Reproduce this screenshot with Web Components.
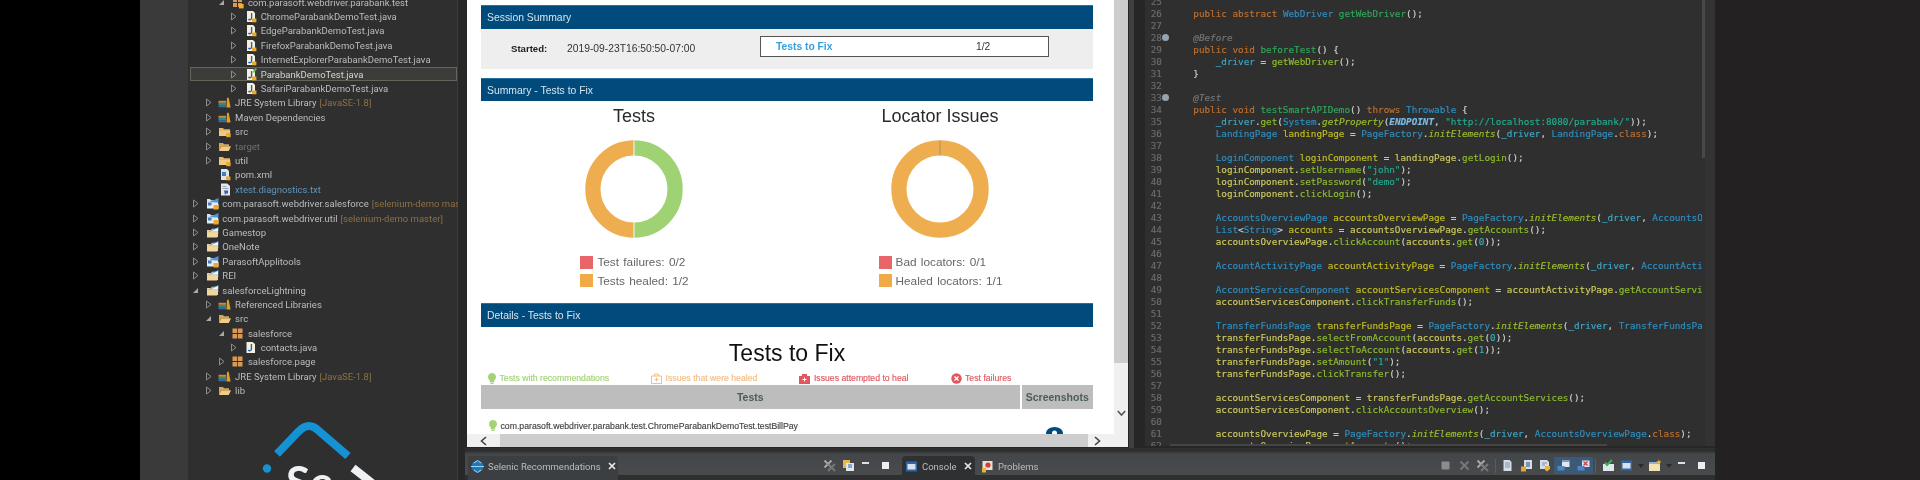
<!DOCTYPE html>
<html>
<head>
<meta charset="utf-8">
<title>Selenic</title>
<style>
html, body { margin: 0; height: 480px; overflow: hidden; background: #000; }
</style>
</head>
<body>
<ide-shot>
    <project-tree slot="tree">
        <tree-row level="2" arrow="open" icon="pkg">com.parasoft.webdriver.parabank.test</tree-row>
        <tree-row level="3" arrow="closed" icon="java">ChromeParabankDemoTest.java</tree-row>
        <tree-row level="3" arrow="closed" icon="java">EdgeParabankDemoTest.java</tree-row>
        <tree-row level="3" arrow="closed" icon="java">FirefoxParabankDemoTest.java</tree-row>
        <tree-row level="3" arrow="closed" icon="java">InternetExplorerParabankDemoTest.java</tree-row>
        <tree-row level="3" arrow="closed" icon="javatest" selected>ParabankDemoTest.java</tree-row>
        <tree-row level="3" arrow="closed" icon="java">SafariParabankDemoTest.java</tree-row>
        <tree-row level="1" arrow="closed" icon="lib" deco="[JavaSE-1.8]">JRE System Library</tree-row>
        <tree-row level="1" arrow="closed" icon="lib">Maven Dependencies</tree-row>
        <tree-row level="1" arrow="closed" icon="srcfolder">src</tree-row>
        <tree-row level="1" arrow="closed" icon="folder" tone="muted">target</tree-row>
        <tree-row level="1" arrow="closed" icon="srcfolder">util</tree-row>
        <tree-row level="1" icon="xml">pom.xml</tree-row>
        <tree-row level="1" icon="txt" tone="link">xtest.diagnostics.txt</tree-row>
        <tree-row level="0" arrow="closed" icon="gitproject" deco="[selenium-demo master]">com.parasoft.webdriver.salesforce</tree-row>
        <tree-row level="0" arrow="closed" icon="gitproject" deco="[selenium-demo master]">com.parasoft.webdriver.util</tree-row>
        <tree-row level="0" arrow="closed" icon="project">Gamestop</tree-row>
        <tree-row level="0" arrow="closed" icon="project">OneNote</tree-row>
        <tree-row level="0" arrow="closed" icon="gitproject">ParasoftApplitools</tree-row>
        <tree-row level="0" arrow="closed" icon="project">REI</tree-row>
        <tree-row level="0" arrow="open" icon="project">salesforceLightning</tree-row>
        <tree-row level="1" arrow="closed" icon="lib">Referenced Libraries</tree-row>
        <tree-row level="1" arrow="open" icon="folder">src</tree-row>
        <tree-row level="2" arrow="open" icon="pkgplain">salesforce</tree-row>
        <tree-row level="3" arrow="closed" icon="javaplain">contacts.java</tree-row>
        <tree-row level="2" arrow="closed" icon="pkgplain">salesforce.page</tree-row>
        <tree-row level="1" arrow="closed" icon="lib" deco="[JavaSE-1.8]">JRE System Library</tree-row>
        <tree-row level="1" arrow="closed" icon="folder">lib</tree-row>
    </project-tree>
    <report-view slot="report"></report-view>
    <code-editor slot="editor"></code-editor>
    <tab-strip slot="tabs-left" kind="left"></tab-strip>
    <tab-strip slot="tabs-right" kind="right"></tab-strip>
</ide-shot>

<script>
const TREE_ICONS = {
    java: '<path d="M3 1h6l2 2v9H3z" fill="#f6f1de"/><path d="M7.600 3v5.200a1.700 1.700 0 0 1-3.100.8" stroke="#2c62b4" stroke-width="1.400" fill="none"/><rect x="8" y="8.500" width="4.400" height="3.800" fill="#eeaa2c"/>',
    javatest: '<path d="M3 1h6l2 2v9H3z" fill="#f6f1de"/><path d="M7.600 3v5.200a1.700 1.700 0 0 1-3.100.8" stroke="#2c62b4" stroke-width="1.400" fill="none"/><path d="M9 4l2-4 2 1-3 4z" fill="#5cb85c"/><rect x="8" y="8.500" width="4.400" height="3.800" fill="#eeaa2c"/>',
    javaplain: '<path d="M2.500 1h6l2.500 2v9H2.500z" fill="#f6f1de"/><path d="M7.400 3v5.200a1.700 1.700 0 0 1-3.100.8" stroke="#2c62b4" stroke-width="1.400" fill="none"/>',
    pkg: '<path d="M2 2h4v4H2zM7 2h4v4H7zM2 7h4v4H2zM7 7h4v4H7z" fill="#d99a58"/><rect x="8" y="8" width="4.600" height="4.400" fill="#f0b030"/>',
    pkgplain: '<path d="M1.500 1.500h4.600v4.600H1.500zM6.900 1.500h4.600v4.600H6.900zM1.500 6.900h4.600v4.600H1.500zM6.900 6.900h4.600v4.600H6.900z" fill="#d99a58"/>',
    lib: '<rect x="0.500" y="7" width="7.500" height="2" fill="#2f8d80"/><rect x="0.500" y="9.200" width="7.500" height="2" fill="#3b6fa8"/><rect x="0.500" y="4.800" width="7.500" height="2" fill="#c98f3a"/><path d="M8.500 11.500L9 2l1.600-.4 2 9.900z" fill="#e0a02c"/>',
    srcfolder: '<path d="M1 3h4l1 1.300h6V11H1z" fill="#e5b768"/><path d="M1 6h11.500L11 11H1z" fill="#f0ca80"/><rect x="8.200" y="8" width="4.400" height="4.200" fill="#eeaa2c"/>',
    folder: '<path d="M1 3h4l1 1.300h5V6H3.400L1 11z" fill="#d9a552"/><path d="M3.400 6.200H13L10.800 11H1z" fill="#f2cc85"/>',
    xml: '<path d="M3 1h6l2 2v9H3z" fill="#dfe4ea"/><rect x="4" y="4" width="4" height="4" fill="#3f7fc0"/><rect x="8" y="8.500" width="4.400" height="3.800" fill="#eeaa2c"/>',
    txt: '<path d="M3 .5h6.200L12 3v9.500H3z" fill="#e3e7ee"/><path d="M4.500 3.500h4M4.500 5.500h6" stroke="#9aa8bc"/><path d="M6 7.500h4v3H8l-1 1.500z" fill="#3360a8"/>',
    project: '<path d="M1 4h4l1-1.300h6V11H1z" fill="#e8d098"/><path d="M2.500 5.500L12.500 1v4.500z" fill="#5a9ad6"/><path d="M4 5.500l8-3.400v3.400z" fill="#f4f6fa"/><path d="M1 6.500h11.500L11 11.500H1z" fill="#f1d79c"/>',
    gitproject: '<path d="M1 2h3l1 1.300h7V11H1z" fill="#d7e2ee"/><path d="M3.500 5L12.500 1v4.500z" fill="#4f94d4"/><path d="M1 6.500h11.500V11.500H1z" fill="#e9edf2"/><path d="M2 5.500h3.500v3H2z" fill="#3f7fc0"/><rect x="7.500" y="8" width="5" height="4.500" fill="#eeaa2c"/>'
};

const treeRowTemplate = document.createElement('template');
treeRowTemplate.innerHTML = `
<style>
    :host {
        display: flex;
        align-items: center;
        height: 14.4px;
        box-sizing: border-box;
        padding-left: calc(4px + var(--level) * 12.8px);
        overflow: hidden;
        white-space: nowrap;
        color: #bcbcbc;
    }
    :host([selected]) {
        margin: 0 1px 0 2px;
        padding-left: calc(2px + var(--level) * 12.8px);
        background: #3c3d38;
        box-shadow: inset 0 0 0 1px #63645a;
        color: #d4d4d4;
    }
    :host([tone="muted"]) .label { color: #6f6f6f; }
    :host([tone="link"]) .label { color: #5f93b8; }
    .arrow { flex: none; width: 7px; height: 9px; margin-right: 6.5px; }
    svg.icon { flex: none; width: 13px; height: 13px; margin-right: 3.8px; }
    .deco { color: #8e7044; margin-left: 3px; }
</style>
<svg class="arrow" viewBox="0 0 7 9"></svg>
<svg class="icon" viewBox="0 0 13 13"></svg>
<span class="label"><slot></slot></span>
<span class="deco"></span>`;

class TreeRow extends HTMLElement {
    constructor() {
        super();
        this.attachShadow({ mode: 'open' }).appendChild(treeRowTemplate.content.cloneNode(true));
    }

    connectedCallback() {
        this.style.setProperty('--level', this.getAttribute('level') || 0);
        const arrow = this.getAttribute('arrow');
        const arrowSvg = this.shadowRoot.querySelector('.arrow');
        if (arrow === 'closed') {
            arrowSvg.innerHTML = '<path d="M1.500 1v7L6 4.500z" fill="none" stroke="#8d8d8d"/>';
        } else if (arrow === 'open') {
            arrowSvg.innerHTML = '<path d="M6 2v5H1z" fill="#a8a8a8"/>';
        }
        this.shadowRoot.querySelector('.icon').innerHTML = TREE_ICONS[this.getAttribute('icon')] || '';
        this.shadowRoot.querySelector('.deco').textContent = this.getAttribute('deco') || '';
    }
}
customElements.define('tree-row', TreeRow);

class ProjectTree extends HTMLElement {
    constructor() {
        super();
        this.attachShadow({ mode: 'open' });
        this.shadowRoot.innerHTML = `
        <style>
            :host {
                display: flex;
                flex-direction: column;
                height: 480px;
                box-sizing: border-box;
                overflow: hidden;
                background: #2f2f2f;
                border-right: 7px solid #282828;
                box-shadow: inset -1px 0 0 #3c3c3c;
                font: 9.5px Roboto, "Liberation Sans", sans-serif;
                filter: blur(.35px);
            }
            .rows { margin-top: -5px; }
            .logo { display: block; flex: none; margin: 23px 0 0 72px; overflow: hidden; }
            .logo text { font: 700 44px Lato, "Liberation Sans", sans-serif; fill: #eef2f5; }
        </style>
        <div class="rows"><slot></slot></div>
        <svg class="logo" width="130" height="60" viewBox="0 0 130 60">
            <path d="M17 33L39 10Q49 0 59 10L88 35" fill="none" stroke="#1592d4" stroke-width="8"/>
            <circle cx="7" cy="47.500" r="4.200" fill="#1592d4"/>
            <text x="26" y="77">Se</text>
            <path d="M93 47L112 62" stroke="#eef2f5" stroke-width="8"/>
        </svg>`;
    }
}
customElements.define('project-tree', ProjectTree);

class ReportBar extends HTMLElement {
    constructor() {
        super();
        this.attachShadow({ mode: 'open' });
        this.shadowRoot.innerHTML = `
        <style>
            :host {
                display: flex;
                align-items: center;
                height: 23.500px;
                box-sizing: border-box;
                padding-left: 6px;
                background: #004a7c;
                border-top: 1px solid #2c6e9c;
                color: #d5e4ee;
                font: 10.400px "Liberation Sans", sans-serif;
            }
        </style>
        <slot></slot>`;
    }
}
customElements.define('report-bar', ReportBar);

class DonutChart extends HTMLElement {
    constructor() {
        super();
        this.attachShadow({ mode: 'open' });
    }

    connectedCallback() {
        const isFull = this.hasAttribute('full');
        const arcs = isFull
            ? `<circle cx="50" cy="50" r="41.100" fill="none" stroke="#eeae4f" stroke-width="15.200"/>
               <path d="M50 1.300V16.500" stroke="#8a8a70" stroke-width=".7"/>`
            : `<path d="M50 8.900A41.100 41.100 0 0 1 50 91.100" fill="none" stroke="#9fd272" stroke-width="15.200"/>
               <path d="M50 91.100A41.100 41.100 0 0 1 50 8.900" fill="none" stroke="#eeae4f" stroke-width="15.200"/>
               <path d="M50 1V17M50 83V99" stroke="#fff" stroke-width=".9"/>`;
        this.shadowRoot.innerHTML = `
        <style>
            :host { display: flex; flex-direction: column; align-items: center; }
            h3 { margin: 1.500px 0 0; font: 400 18px/26px "Liberation Sans", sans-serif; color: #2b2b2b; }
            svg { display: block; width: 100px; height: 100px; margin: 10.500px 0 14px; }
            ul { margin: 0 0 0 1px; padding: 0; list-style: none; font: 11.800px/18.400px "Liberation Sans", sans-serif; color: #666; word-spacing: 1px; }
            li { display: flex; align-items: center; gap: 4px; }
            i { width: 13px; height: 13px; background: var(--c); }
        </style>
        <h3>${this.getAttribute('title')}</h3>
        <svg viewBox="0 0 100 100">${arcs}</svg>
        <ul>
            <li><i style="--c:#e8656a"></i>${this.getAttribute('bad')}</li>
            <li><i style="--c:#f0ab48"></i>${this.getAttribute('healed')}</li>
        </ul>`;
    }
}
customElements.define('donut-chart', DonutChart);

const BULB = '<svg width="8" height="11" viewBox="0 0 8 11"><path d="M4 0a4 4 0 0 1 2.200 7.300V9H1.800V7.300A4 4 0 0 1 4 0z" fill="currentColor"/><rect x="2.400" y="9.500" width="3.200" height="1.500" fill="currentColor"/></svg>';

class ReportView extends HTMLElement {
    constructor() {
        super();
        this.attachShadow({ mode: 'open' });
        this.shadowRoot.innerHTML = `
        <style>
            :host {
                display: grid;
                grid-template-columns: 1fr 14px;
                grid-template-rows: 434px 13px;
                height: 448px;
                box-sizing: border-box;
                padding-left: 2px;
                padding-bottom: 1px;
                background: #262626;
                font-family: "Liberation Sans", sans-serif;
                filter: blur(.35px);
            }
            .page { background: #fff; overflow: hidden; padding: 5.300px 21px 0 14px; min-width: 0; }
            .session {
                display: flex;
                align-items: flex-start;
                height: 40px;
                box-sizing: border-box;
                padding: 7px 44px 0 30px;
                background: #eee;
                font-size: 10.300px;
                color: #333;
            }
            .session b { width: 56px; margin-top: 7px; font-size: 9.600px; color: #222; }
            .session .date { width: 193px; margin-top: 7px; }
            .fix-box {
                flex: 1;
                display: flex;
                align-items: center;
                height: 21px;
                box-sizing: border-box;
                padding-left: 15px;
                background: #fff;
                border: 1px solid #555;
            }
            .fix-box a { width: 200px; font-weight: 700; color: #35a0e4; }
            report-bar.second { margin-top: 9px; }
            .charts { display: grid; grid-template-columns: 1fr 1fr; }
            report-bar.details { margin-top: 13px; }
            h2 { margin: 13px 0 0; text-align: center; font: 400 23px/26px "Liberation Sans", sans-serif; color: #111; }
            .key {
                display: flex;
                gap: 42px;
                align-items: center;
                height: 14px;
                margin-top: 5.500px;
                padding-left: 7px;
                font-size: 8.700px;
                -webkit-text-stroke: .15px currentColor;
            }
            .key span { display: flex; align-items: center; gap: 3.500px; white-space: nowrap; }
            .head { display: grid; grid-template-columns: 1fr 71.500px; gap: 2px; height: 23.600px; }
            .head div {
                display: flex;
                align-items: center;
                justify-content: center;
                background: #bdbdbd;
                font-size: 10.500px;
                font-weight: 700;
                color: #4b5c5c;
            }
            .row {
                position: relative;
                display: flex;
                align-items: center;
                gap: 3.500px;
                height: 32px;
                padding: 1px 0 0 8px;
                font-size: 8.700px;
                -webkit-text-stroke: .15px currentColor;
                color: #444;
                white-space: nowrap;
            }
            .row svg:first-child { color: #a3d277; }
            .dome { position: absolute; right: 30px; top: 18px; }
            .vbar { display: flex; flex-direction: column; background: #f0f0f0; }
            .vbar .thumb { height: 363px; flex: none; background: #cdcdcd; }
            .vbar .down { margin: 47px 0 0 2.500px; }
            .hbar { grid-column: 1 / 3; display: flex; background: #cdcdcd; }
            .hbar .btn { display: flex; align-items: center; background: #f0f0f0; }
            .hbar .l { width: 33px; justify-content: center; }
            .hbar .r { width: 40px; margin-left: auto; padding-left: 6px; box-sizing: border-box; }
        </style>
        <div class="page">
            <report-bar>Session Summary</report-bar>
            <div class="session">
                <b>Started:</b>
                <span class="date">2019-09-23T16:50:50-07:00</span>
                <div class="fix-box"><a>Tests to Fix</a><span>1/2</span></div>
            </div>
            <report-bar class="second">Summary - Tests to Fix</report-bar>
            <div class="charts">
                <donut-chart title="Tests" bad="Test failures: 0/2" healed="Tests healed: 1/2"></donut-chart>
                <donut-chart title="Locator Issues" full bad="Bad locators: 0/1" healed="Healed locators: 1/1"></donut-chart>
            </div>
            <report-bar class="details">Details - Tests to Fix</report-bar>
            <h2>Tests to Fix</h2>
            <div class="key">
                <span style="color:#a3d277">${BULB}Tests with recommendations</span>
                <span style="color:#f3bd85"><svg width="11" height="11" viewBox="0 0 11 11"><path d="M.5 3h10v7.500H.5zM3.500 3V1h4v2M5.500 4.500v4M3.500 6.500h4" fill="none" stroke="currentColor"/></svg>Issues that were healed</span>
                <span style="color:#e0585e"><svg width="11" height="11" viewBox="0 0 11 11"><path d="M0 3h3V1h5v2h3v8H0z" fill="currentColor"/><path d="M5.500 4.500v4M3.500 6.500h4" stroke="#fff"/></svg>Issues attempted to heal</span>
                <span style="color:#e0585e"><svg width="11" height="11" viewBox="0 0 11 11"><circle cx="5.500" cy="5.500" r="5.200" fill="currentColor"/><path d="M3.500 3.500l4 4M7.500 3.500l-4 4" stroke="#fff" stroke-width="1.400"/></svg>Test failures</span>
            </div>
            <div class="head"><div>Tests</div><div>Screenshots</div></div>
            <div class="row">${BULB}com.parasoft.webdriver.parabank.test.ChromeParabankDemoTest.testBillPay
                <svg class="dome" width="17" height="10" viewBox="0 0 17 10"><path d="M0 10V6a8.500 6 0 0 1 17 0v4z" fill="#004a7c"/><circle cx="8.500" cy="6" r="2.500" fill="#fff"/></svg>
            </div>
        </div>
        <div class="vbar">
            <div class="thumb"></div>
            <svg class="down" width="9" height="7" viewBox="0 0 9 7"><path d="M.8 1l3.700 4L8.200 1" fill="none" stroke="#555" stroke-width="1.600"/></svg>
        </div>
        <div class="hbar">
            <div class="btn l"><svg width="7" height="10" viewBox="0 0 7 10"><path d="M6 1L1.500 5 6 9" fill="none" stroke="#444" stroke-width="1.600"/></svg></div>
            <div class="btn r"><svg width="7" height="10" viewBox="0 0 7 10"><path d="M1 1l4.500 4L1 9" fill="none" stroke="#444" stroke-width="1.600"/></svg></div>
        </div>`;
    }
}
customElements.define('report-view', ReportView);

// {x|text} becomes a coloured span, x is the token class
const CODE_LINES = [
    [25, ''],
    [26, '{k|public abstract} {t|WebDriver} {d|getWebDriver}();'],
    [27, ''],
    [28, '{a|@Before}', 1],
    [29, '{k|public void} {d|beforeTest}() {'],
    [30, '    {f|_driver} = {m|getWebDriver}();'],
    [31, '}'],
    [32, ''],
    [33, '{a|@Test}', 1],
    [34, '{k|public void} {d|testSmartAPIDemo}() {k|throws} {t|Throwable} {'],
    [35, '    {f|_driver}.{m|get}({t|System}.{s|getProperty}({c|ENDPOINT}, {q|"http://localhost:8080/parabank/"}));'],
    [36, '    {t|LandingPage} {v|landingPage} = {t|PageFactory}.{s|initElements}({f|_driver}, {t|LandingPage}.{k|class});'],
    [37, ''],
    [38, '    {t|LoginComponent} {v|loginComponent} = {u|landingPage}.{m|getLogin}();'],
    [39, '    {u|loginComponent}.{m|setUsername}({q|"john"});'],
    [40, '    {u|loginComponent}.{m|setPassword}({q|"demo"});'],
    [41, '    {u|loginComponent}.{m|clickLogin}();'],
    [42, ''],
    [43, '    {t|AccountsOverviewPage} {v|accountsOverviewPage} = {t|PageFactory}.{s|initElements}({f|_driver}, {t|AccountsOverviewPage}.{k|class});'],
    [44, '    {t|List}&lt;{t|String}&gt; {v|accounts} = {u|accountsOverviewPage}.{m|getAccounts}();'],
    [45, '    {u|accountsOverviewPage}.{m|clickAccount}({u|accounts}.{m|get}({n|0}));'],
    [46, ''],
    [47, '    {t|AccountActivityPage} {v|accountActivityPage} = {t|PageFactory}.{s|initElements}({f|_driver}, {t|AccountActivityPage}.{k|class});'],
    [48, ''],
    [49, '    {t|AccountServicesComponent} {v|accountServicesComponent} = {u|accountActivityPage}.{m|getAccountServices}();'],
    [50, '    {u|accountServicesComponent}.{m|clickTransferFunds}();'],
    [51, ''],
    [52, '    {t|TransferFundsPage} {v|transferFundsPage} = {t|PageFactory}.{s|initElements}({f|_driver}, {t|TransferFundsPage}.{k|class});'],
    [53, '    {u|transferFundsPage}.{m|selectFromAccount}({u|accounts}.{m|get}({n|0}));'],
    [54, '    {u|transferFundsPage}.{m|selectToAccount}({u|accounts}.{m|get}({n|1}));'],
    [55, '    {u|transferFundsPage}.{m|setAmount}({q|"1"});'],
    [56, '    {u|transferFundsPage}.{m|clickTransfer}();'],
    [57, ''],
    [58, '    {u|accountServicesComponent} = {u|transferFundsPage}.{m|getAccountServices}();'],
    [59, '    {u|accountServicesComponent}.{m|clickAccountsOverview}();'],
    [60, ''],
    [61, '    {u|accountsOverviewPage} = {t|PageFactory}.{s|initElements}({f|_driver}, {t|AccountsOverviewPage}.{k|class});'],
    [62, '    {u|accountsOverviewPage}.{m|getAccounts}();']
];

class CodeEditor extends HTMLElement {
    constructor() {
        super();
        this.attachShadow({ mode: 'open' });
        const lines = CODE_LINES.map(([num, src, mark]) => {
            const html = src.replace(/\{(\w)\|([^}]*)\}/g, '<span class="$1">$2</span>');
            return `<div class="line"><span class="num">${num}${mark ? '<i></i>' : ''}</span><span class="src">${html}</span></div>`;
        }).join('');
        this.shadowRoot.innerHTML = `
        <style>
            :host {
                display: flex;
                height: 448px;
                overflow: hidden;
                background: #262626;
                font: 9.300px/12px "DejaVu Sans Mono", "Liberation Mono", monospace;
                color: #d2d2d2;
                -webkit-text-stroke: .15px currentColor;
                filter: blur(.35px);
            }
            .edge { flex: none; width: 5px; background: #3f3f3f; margin-left: 1px; }
            .gap { flex: none; width: 11px; }
            .main { position: relative; flex: 1; min-width: 0; height: 446px; overflow: hidden; background: #2f2f2f; }
            .lines { margin-top: -4.300px; }
            .line { display: flex; height: 12px; white-space: pre; }
            .num { position: relative; flex: none; width: 48.300px; padding-left: 5.700px; box-sizing: border-box; color: #6c6c6c; }
            .num i { position: absolute; left: 16.500px; top: 2.500px; width: 7px; height: 7px; border-radius: 50%; background: #93a4b0; }
            .hscroll { position: absolute; left: 25px; bottom: 0; width: 437px; height: 2px; background: #454545; }
            .vbar { flex: none; width: 3px; height: 446px; background: #2f2f2f; }
            .vbar div { height: 158px; background: #484848; }
            .side { flex: none; width: 10px; height: 446px; background: #333; }
            .k { color: #c0702f; }
            .t { color: #2f8fc0; }
            .d { color: #2fa85a; }
            .m { color: #8fbc2f; }
            .s { color: #9cc02a; font-style: italic; }
            .f { color: #3fa8c6; }
            .a { color: #767676; font-style: italic; }
            .c { color: #78bce8; font-style: italic; font-weight: 700; }
            .q { color: #20ad8f; }
            .v { color: #c4bf22; }
            .u { color: #cdca5e; }
            .n { color: #37b0b4; }
        </style>
        <div class="edge"></div>
        <div class="gap"></div>
        <div class="main">
            <div class="lines">${lines}</div>
            <div class="hscroll"></div>
        </div>
        <div class="vbar"><div></div></div>
        <div class="side"></div>`;
    }
}
customElements.define('code-editor', CodeEditor);

const TOOL = {
    stop: '<rect x="2.500" y="2.500" width="8" height="8" rx="1" fill="#8c8c8c"/>',
    x: '<path d="M2.500 2.500l8 8M10.500 2.500l-8 8" stroke="#777" stroke-width="2"/>',
    xx: '<path d="M1.500 1.500l7 7M8.500 1.500l-7 7" stroke="#aaa" stroke-width="1.800"/><path d="M5 5l7 7M12 5l-7 7" stroke="#777" stroke-width="1.800"/>',
    doc: '<path d="M2.500 1h6l2 2v9h-8z" fill="#d6dde6"/><path d="M4 4h5M4 6h5M4 8h5" stroke="#7b93b4"/>',
    doclock: '<path d="M4 1h8v9H4z" fill="#d6dde6"/><path d="M6 3h4v5H6z" fill="#7b93b4"/><rect x="1" y="7.500" width="5" height="5" fill="#e8a52c"/>',
    docarrow: '<path d="M2 1h7l2 2v7H2z" fill="#d6dde6"/><path d="M4 4h5M4 6h3" stroke="#7b93b4"/><path d="M7 7h5v3l-3 2.500-2-1.500z" fill="#e8b33c"/>',
    winblue: '<path d="M5 1.500h7.500v6.500H5z" fill="#dfe6ee"/><path d="M.5 7h7v4.500h-7z" fill="#4d86c0"/><path d="M5 1.500h7.500V3H5z" fill="#6d9fd0"/>',
    winred: '<path d="M5 1.500h7.500v6.500H5z" fill="#dfe6ee"/><path d="M6.500 2.500l4 4M10.500 2.500l-4 4" stroke="#d4444a" stroke-width="1.500"/><path d="M.5 7h7v4.500h-7z" fill="#4d86c0"/>',
    inbox: '<path d="M1 5h11v7H1z" fill="#dfe6ee"/><path d="M3 3.500l2 2.500 5-5" fill="none" stroke="#3fae4c" stroke-width="2"/>',
    console: '<rect x="1" y="1.500" width="11" height="10" fill="#2f66a8"/><rect x="2.500" y="4" width="8" height="5.500" fill="#d8e0ea"/>',
    star: '<path d="M1 3h11v9H1z" fill="#f3e3b0"/><path d="M1 3h11v2H1z" fill="#8fb4d8"/><path d="M10.500 0l1 2 2 .5-1.500 1.500-1 2-1-2-1.500-1.500 2-.5z" fill="#f0b030"/>',
    stackdoc: '<path d="M1 1h7v8H1z" fill="#e6b64c"/><path d="M4 4h8v8H4z" fill="#dfe6ee"/><path d="M6 6h4M6 8h4" stroke="#2f66a8"/>',
    selenic: '<circle cx="6.500" cy="6.500" r="6" fill="#1f79b8"/><path d="M0 6.500h13M3 3l3.500-2.500L10 3M3 10l3.500 2.500L10 10" stroke="#a9d3ee" fill="none"/>',
    problems: '<path d="M1.500 1h10v9h-10z" fill="#e9e2d4"/><circle cx="7" cy="5" r="2.600" fill="#d33c3c"/><path d="M1 8h4v4.500H1z" fill="#e9b23c"/>'
};

function toolIcon(name) {
    return `<svg width="13" height="13" viewBox="0 0 13 13">${TOOL[name]}</svg>`;
}

const CLOSE = '<svg class="close" width="8" height="8" viewBox="0 0 8 8"><path d="M1 1l6 6M7 1L1 7" stroke="#e8e8e8" stroke-width="1.700"/></svg>';
const MIN_MAX = '<span class="min"></span><span class="max"></span>';

class TabStrip extends HTMLElement {
    constructor() {
        super();
        this.attachShadow({ mode: 'open' });
    }

    connectedCallback() {
        const left = this.getAttribute('kind') === 'left';
        const body = left
            ? `<div class="tab" style="margin-left:3px;width:150px">
                    <svg width="13" height="13" viewBox="0 0 13 13">${TOOL.selenic}</svg>
                    <span>Selenic Recommendations</span>${CLOSE}
               </div>
               <div class="tools" style="margin-left:205px;gap:5.500px">
                    ${toolIcon('xx')}${toolIcon('stackdoc')}
                    <span class="min" style="margin-left:2px"></span><span class="max" style="margin-left:7px"></span>
               </div>`
            : `<div class="tab" style="margin-left:5px;width:73px">
                    <svg width="13" height="13" viewBox="0 0 13 13">${TOOL.console}</svg>
                    <span>Console</span>${CLOSE}
               </div>
               <div class="plain">
                    <svg width="13" height="13" viewBox="0 0 13 13">${TOOL.problems}</svg>
                    <span>Problems</span>
               </div>
               <div class="tools" style="margin-left:401px;gap:5.500px">
                    ${toolIcon('stop')}${toolIcon('x')}${toolIcon('xx')}<i class="sep"></i>
                    ${toolIcon('doc')}${toolIcon('doclock')}${toolIcon('docarrow')}
                    <span class="hilite">${toolIcon('winblue')}${toolIcon('winred')}</span><i class="sep"></i>
                    ${toolIcon('inbox')}${toolIcon('console')}<i class="drop"></i>
                    ${toolIcon('star')}<i class="drop"></i>
                    ${MIN_MAX}
               </div>`;
        this.shadowRoot.innerHTML = `
        <style>
            :host {
                display: flex;
                align-items: flex-end;
                height: 32px;
                box-sizing: border-box;
                background: linear-gradient(#2e2e2e 0, #2e2e2e 3px, #44474a 6px, #484a4c 27px, #2f2f2f 27px);
                font: 9.500px Roboto, "Liberation Sans", sans-serif;
                color: #bcbcbc;
                white-space: nowrap;
                filter: blur(.35px);
            }
            .tab, .plain { display: flex; align-items: center; gap: 4px; height: 24px; padding: 0 0 4px 3px; box-sizing: border-box; flex: none; }
            .tab {
                background: #3c3f42;
                border-radius: 4px 4px 0 0;
            }
            :host([kind="right"]) .tab { background: #2f3032; }
            .close { margin-left: 3px; }
            .plain { margin-left: 3px; }
            .tools { display: flex; align-items: center; height: 24px; padding-bottom: 5px; box-sizing: border-box; flex: none; }
            .sep { width: 1px; height: 14px; background: #5a5d60; }
            .hilite { display: flex; gap: 7px; padding: 2px 3px; margin: 0 -3px; background: #3b5a78; }
            .drop { width: 0; height: 0; margin: 0 -1px; border: 3px solid transparent; border-top: 4px solid #2a2a2a; border-bottom: 0; }
            .min { display: block; width: 7px; height: 2px; margin-left: 2px; background: #e0e0e0; position: relative; top: -3px; }
            .max { display: block; width: 7px; height: 7px; margin-left: 7px; background: #eee; }
        </style>
        ${body}`;
    }
}
customElements.define('tab-strip', TabStrip);

class IdeShot extends HTMLElement {
    constructor() {
        super();
        this.attachShadow({ mode: 'open' });
        this.shadowRoot.innerHTML = `
        <style>
            :host {
                display: grid;
                grid-template-columns: 140px 48px 277px 663px 587px 432px 1fr;
                grid-template-rows: 448px 32px;
                width: 1920px;
                height: 480px;
                overflow: hidden;
                background: #000;
            }
            .black { grid-row: 1 / 3; background: #000; }
            .strip { grid-row: 1 / 3; background: #3a3a3a; }
            .tree { grid-row: 1 / 3; min-width: 0; }
            .right { grid-row: 1 / 3; grid-column: 6 / 8; background: #232121; }
            .tabs { grid-column: 4 / 6; display: grid; grid-template-columns: 432px 1fr; background: #262626; }
        </style>
        <div class="black"></div>
        <div class="strip"></div>
        <div class="tree"><slot name="tree"></slot></div>
        <slot name="report"></slot>
        <slot name="editor"></slot>
        <div class="right"></div>
        <div class="tabs"><slot name="tabs-left"></slot><slot name="tabs-right"></slot></div>`;
    }
}
customElements.define('ide-shot', IdeShot);
</script>
</body>
</html>
